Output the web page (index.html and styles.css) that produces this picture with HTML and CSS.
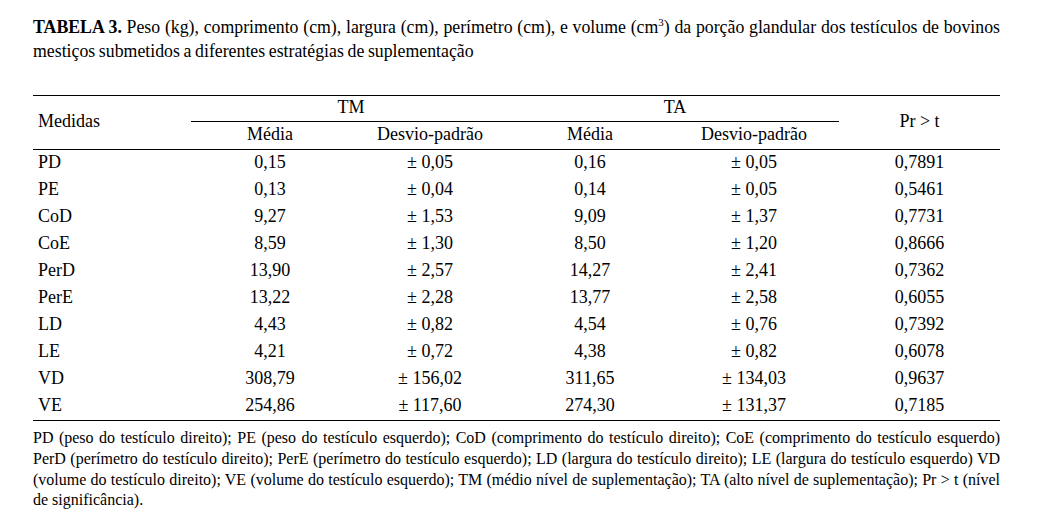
FILE: index.html
```html
<!DOCTYPE html>
<html lang="pt">
<head>
<meta charset="utf-8">
<link rel="stylesheet" href="styles.css">
</head>
<body>
<div class="page">
  <p class="caption"><b>TABELA 3.</b> Peso (kg), comprimento (cm), largura (cm), perímetro (cm), e volume (cm<sup>3</sup>) da porção glandular dos testículos de bovinos mestiços submetidos a diferentes estratégias de suplementação</p>
  <table class="data">
    <colgroup>
      <col class="c1"><col class="c2"><col class="c3"><col class="c4"><col class="c5"><col class="c6">
    </colgroup>
    <thead>
      <tr class="h1">
        <th rowspan="2" class="left">Medidas</th>
        <th colspan="2" class="group">TM</th>
        <th colspan="2" class="group">TA</th>
        <th rowspan="2">Pr &gt; t</th>
      </tr>
      <tr class="h2">
        <th>Média</th><th>Desvio-padrão</th><th>Média</th><th>Desvio-padrão</th>
      </tr>
    </thead>
    <tbody>
      <tr><td class="left">PD</td><td>0,15</td><td>± 0,05</td><td>0,16</td><td>± 0,05</td><td>0,7891</td></tr>
      <tr><td class="left">PE</td><td>0,13</td><td>± 0,04</td><td>0,14</td><td>± 0,05</td><td>0,5461</td></tr>
      <tr><td class="left">CoD</td><td>9,27</td><td>± 1,53</td><td>9,09</td><td>± 1,37</td><td>0,7731</td></tr>
      <tr><td class="left">CoE</td><td>8,59</td><td>± 1,30</td><td>8,50</td><td>± 1,20</td><td>0,8666</td></tr>
      <tr><td class="left">PerD</td><td>13,90</td><td>± 2,57</td><td>14,27</td><td>± 2,41</td><td>0,7362</td></tr>
      <tr><td class="left">PerE</td><td>13,22</td><td>± 2,28</td><td>13,77</td><td>± 2,58</td><td>0,6055</td></tr>
      <tr><td class="left">LD</td><td>4,43</td><td>± 0,82</td><td>4,54</td><td>± 0,76</td><td>0,7392</td></tr>
      <tr><td class="left">LE</td><td>4,21</td><td>± 0,72</td><td>4,38</td><td>± 0,82</td><td>0,6078</td></tr>
      <tr><td class="left">VD</td><td>308,79</td><td>± 156,02</td><td>311,65</td><td>± 134,03</td><td>0,9637</td></tr>
      <tr class="last"><td class="left">VE</td><td>254,86</td><td>± 117,60</td><td>274,30</td><td>± 131,37</td><td>0,7185</td></tr>
    </tbody>
  </table>
  <p class="note">PD (peso do testículo direito); PE (peso do testículo esquerdo); CoD (comprimento do testículo direito); CoE (comprimento do testículo esquerdo) PerD (perímetro do testículo direito); PerE (perímetro do testículo esquerdo); LD (largura do testículo direito); LE (largura do testículo esquerdo) VD (volume do testículo direito); VE (volume do testículo esquerdo); TM (médio nível de suplementação); TA (alto nível de suplementação); Pr &gt; t (nível de significância).</p>
</div>
</body>
</html>
```

FILE: styles.css
```css
html, body {
  margin: 0;
  padding: 0;
  background: #fff;
}
body {
  font-family: "Liberation Serif", "Times New Roman", serif;
  color: #000;
}
.page {
  width: 967px;
  padding: 15px 0 0 33px;
}
.caption {
  margin: 0;
  font-size: 17.8px;
  line-height: 24px;
  word-spacing: -0.8px;
  text-align: justify;
}
.caption sup {
  font-size: 11px;
  line-height: 0;
  vertical-align: 7px;
}
.data {
  margin-top: 32px;
  width: 967px;
  border-collapse: collapse;
  table-layout: fixed;
  font-size: 18px;
}
.c1 { width: 158px; }
.c2 { width: 158px; }
.c3 { width: 162px; }
.c4 { width: 158px; }
.c5 { width: 170px; }
.c6 { width: 161px; }
.data th, .data td {
  font-weight: normal;
  text-align: center;
  padding: 0 0 3px 0;
  height: 24px;
  line-height: 20px;
  vertical-align: middle;
}
.data .left {
  text-align: left;
  padding-left: 5px;
}
.data thead tr.h1 th {
  border-top: 1px solid #000;
  height: 22px;
}
.data th.group {
  border-bottom: 1px solid #000;
}
.data thead tr.h2 th {
  border-bottom: 1px solid #000;
}
.data thead th[rowspan] {
  border-bottom: 1px solid #000;
}
.data tr.last td {
  border-bottom: 1px solid #000;
}
.note {
  margin: 7px 0 0 0;
  font-size: 16px;
  line-height: 20.8px;
  text-align: justify;
}
```
